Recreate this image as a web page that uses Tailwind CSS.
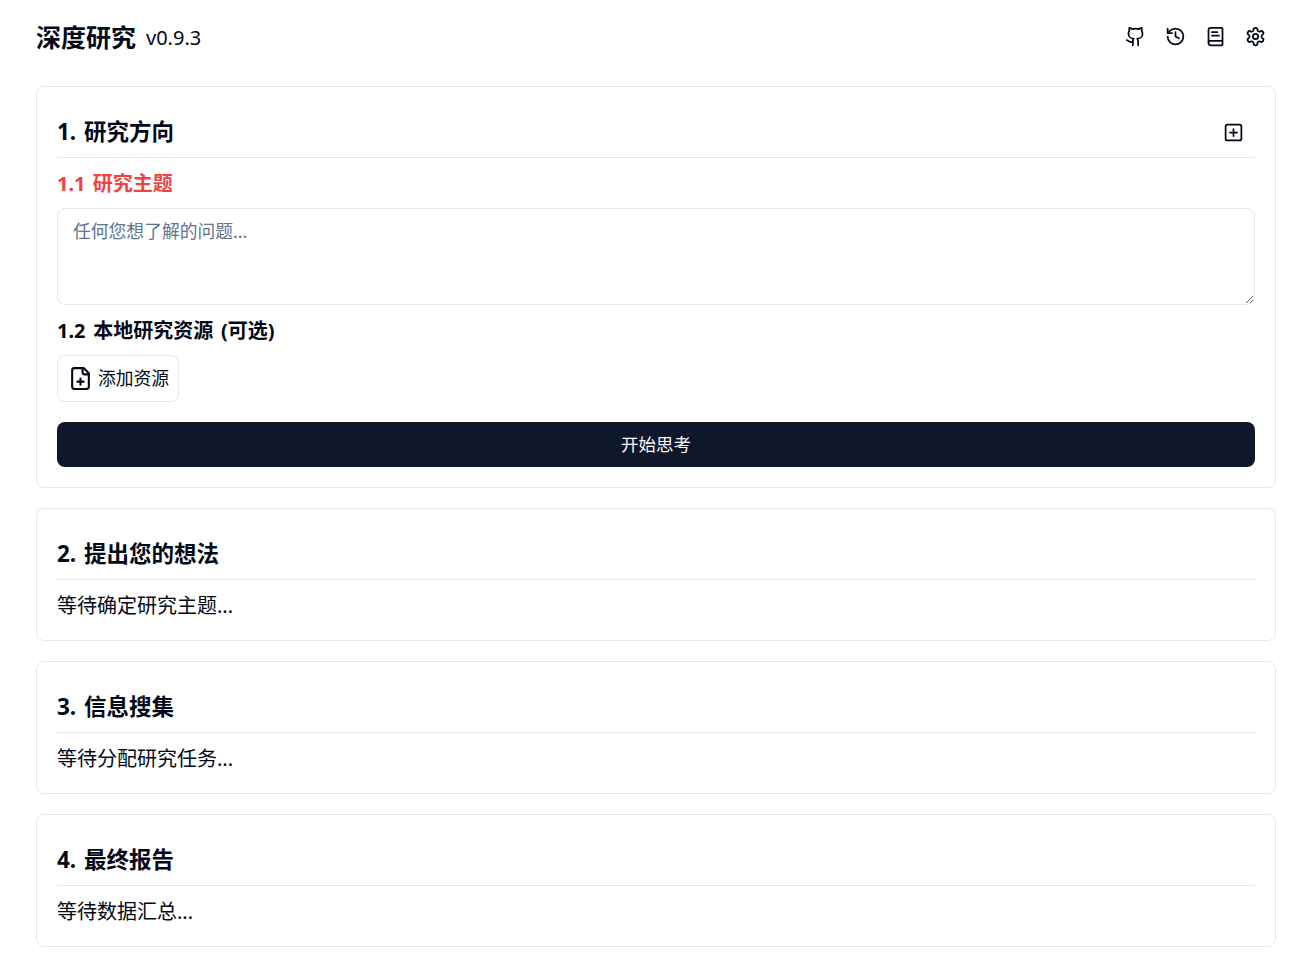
<!DOCTYPE html>
<html lang="zh-CN">
<head>
<meta charset="utf-8">
<title>深度研究</title>
<script src="https://cdn.jsdelivr.net/npm/@tailwindcss/browser@4"></script>
</head>
<body class="bg-white text-[#020817] font-['Noto_Sans','Noto_Sans_CJK_SC',sans-serif]">
<div class="pl-9 pr-[30px] flex flex-col">
  <header class="h-[86px] flex items-center justify-between pb-[10px]">
    <h1 class="flex items-baseline text-[25px] leading-[38px] font-bold">深度研究<small class="relative -top-[2px] ml-[10px] text-[20px] font-normal">v0.9.3</small></h1>
    <div class="flex pb-1 pr-[0.5px]">
      <span class="w-10 h-10 flex items-center justify-center"><svg class="w-[21px] h-[21px]" viewBox="0 0 24 24" fill="none" stroke="currentColor" stroke-width="2" stroke-linecap="round" stroke-linejoin="round"><path d="M15 22v-4a4.8 4.8 0 0 0-1-3.5c3 0 6-2 6-5.5.08-1.25-.27-2.48-1-3.5.28-1.15.28-2.35 0-3.5 0 0-1 0-3 1.5-2.64-.5-5.36-.5-8 0C6 2 5 2 5 2c-.3 1.15-.3 2.35 0 3.5A5.403 5.403 0 0 0 4 9c0 3.5 3 5.5 6 5.5-.39.49-.68 1.05-.85 1.65-.17.6-.22 1.23-.15 1.85v4"/><path d="M9 18c-4.51 2-5-2-7-2"/></svg></span>
      <span class="w-10 h-10 flex items-center justify-center"><svg class="w-[21px] h-[21px]" viewBox="0 0 24 24" fill="none" stroke="currentColor" stroke-width="2" stroke-linecap="round" stroke-linejoin="round"><path d="M3 12a9 9 0 1 0 9-9 9.75 9.75 0 0 0-6.74 2.74L3 8"/><path d="M3 3v5h5"/><path d="M12 7v5l4 2"/></svg></span>
      <span class="w-10 h-10 flex items-center justify-center"><svg class="w-[21px] h-[21px]" viewBox="0 0 24 24" fill="none" stroke="currentColor" stroke-width="2" stroke-linecap="round" stroke-linejoin="round"><path d="M4 19.5v-15A2.5 2.5 0 0 1 6.5 2H19a1 1 0 0 1 1 1v18a1 1 0 0 1-1 1H6.5a1 1 0 0 1 0-5H20"/><path d="M8 11h8"/><path d="M8 7h6"/></svg></span>
      <span class="w-10 h-10 flex items-center justify-center"><svg class="w-[21px] h-[21px]" viewBox="0 0 24 24" fill="none" stroke="currentColor" stroke-width="2" stroke-linecap="round" stroke-linejoin="round"><path d="M12.22 2h-.44a2 2 0 0 0-2 2v.18a2 2 0 0 1-1 1.73l-.43.25a2 2 0 0 1-2 0l-.15-.08a2 2 0 0 0-2.73.73l-.22.38a2 2 0 0 0 .73 2.73l.15.1a2 2 0 0 1 1 1.72v.51a2 2 0 0 1-1 1.74l-.15.09a2 2 0 0 0-.73 2.73l.22.38a2 2 0 0 0 2.73.73l.15-.08a2 2 0 0 1 2 0l.43.25a2 2 0 0 1 1 1.73V20a2 2 0 0 0 2 2h.44a2 2 0 0 0 2-2v-.18a2 2 0 0 1 1-1.73l.43-.25a2 2 0 0 1 2 0l.15.08a2 2 0 0 0 2.73-.73l.22-.39a2 2 0 0 0-.73-2.73l-.15-.08a2 2 0 0 1-1-1.74v-.5a2 2 0 0 1 1-1.74l.15-.09a2 2 0 0 0 .73-2.73l-.22-.38a2 2 0 0 0-2.73-.73l-.15.08a2 2 0 0 1-2 0l-.43-.25a2 2 0 0 1-1-1.73V4a2 2 0 0 0-2-2z"/><circle cx="12" cy="12" r="3"/></svg></span>
    </div>
  </header>
  <main class="flex flex-col gap-5">
    <section class="border border-slate-200 rounded-lg p-5">
      <div class="h-[51px] border-b border-slate-200 flex items-center justify-between">
        <h3 class="text-[22.5px] font-bold leading-[30px] [word-spacing:2px]">1. 研究方向</h3>
        <span class="w-10 h-10 flex items-center justify-center mr-[2px]"><svg class="w-[21px] h-[21px]" viewBox="0 0 24 24" fill="none" stroke="currentColor" stroke-width="2" stroke-linecap="round" stroke-linejoin="round"><rect width="18" height="18" x="3" y="3" rx="2"/><path d="M8 12h8"/><path d="M12 8v8"/></svg></span>
      </div>
      <h4 class="h-[50px] pt-[2px] flex items-center text-[20px] font-bold text-[#ef4444] [word-spacing:2px]">1.1 研究主题</h4>
      <textarea rows="3" placeholder="任何您想了解的问题..." class="block w-full h-[97px] border border-slate-200 rounded-lg px-[15px] py-[9px] text-[17.8px] leading-[27px] placeholder:text-slate-500"></textarea>
      <h4 class="h-[50px] pt-[2px] block leading-[48px] text-[20px] font-bold [word-spacing:2.5px]">1.2 本地研究资源 (可选)</h4>
      <div class="w-[122px] h-[47px] border border-slate-200 rounded-lg flex items-center pl-[10px] gap-[5px] text-[17.8px]">
        <svg class="w-[25px] h-[25px] shrink-0" viewBox="0 0 24 24" fill="none" stroke="currentColor" stroke-width="2" stroke-linecap="round" stroke-linejoin="round"><path d="M15 2H6a2 2 0 0 0-2 2v16a2 2 0 0 0 2 2h12a2 2 0 0 0 2-2V7Z"/><path d="M14 2v4a2 2 0 0 0 2 2h4"/><path d="M9 15h6"/><path d="M12 18v-6"/></svg>
        <span class="whitespace-nowrap">添加资源</span>
      </div>
      <button class="mt-5 w-full h-[45px] rounded-lg bg-[#0f172a] text-slate-50 text-[17.5px] flex items-center justify-center">开始思考</button>
    </section>
    <section class="border border-slate-200 rounded-lg p-5">
      <div class="h-[51px] border-b border-slate-200 flex items-center"><h3 class="text-[22.5px] font-bold leading-[30px] [word-spacing:2px]">2. 提出您的想法</h3></div>
      <p class="pt-[12px] h-10 text-[20px] leading-[27px]">等待确定研究主题...</p>
    </section>
    <section class="border border-slate-200 rounded-lg p-5">
      <div class="h-[51px] border-b border-slate-200 flex items-center"><h3 class="text-[22.5px] font-bold leading-[30px] [word-spacing:2px]">3. 信息搜集</h3></div>
      <p class="pt-[12px] h-10 text-[20px] leading-[27px]">等待分配研究任务...</p>
    </section>
    <section class="border border-slate-200 rounded-lg p-5">
      <div class="h-[51px] border-b border-slate-200 flex items-center"><h3 class="text-[22.5px] font-bold leading-[30px] [word-spacing:2px]">4. 最终报告</h3></div>
      <p class="pt-[12px] h-10 text-[20px] leading-[27px]">等待数据汇总...</p>
    </section>
  </main>
</div>
</body>
</html>
